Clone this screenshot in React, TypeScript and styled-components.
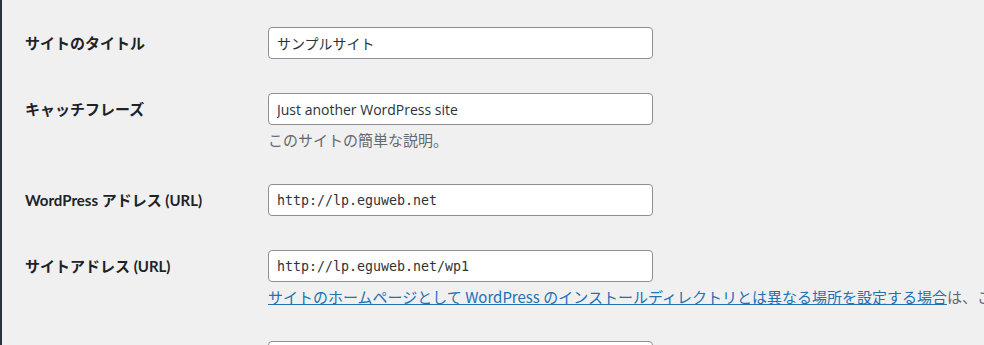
import React from "react";
import styled, { createGlobalStyle } from "styled-components";

const GlobalStyle = createGlobalStyle`
  html, body {
    margin: 0;
    padding: 0;
    background: #f0f0f1;
    overflow: hidden;
  }
  body {
    font-family: "Noto Sans CJK JP", "Open Sans", sans-serif;
    color: #1d2327;
  }
`;

const fields = [
  { id: "blogname", label: "サイトのタイトル", value: "サンプルサイト", mono: false },
  {
    id: "blogdescription",
    label: "キャッチフレーズ",
    value: "Just another WordPress site",
    mono: false,
    desc: "このサイトの簡単な説明。",
  },
  { id: "siteurl", label: "WordPress アドレス (URL)", value: "http://lp.eguweb.net", mono: true },
  {
    id: "home",
    label: "サイトアドレス (URL)",
    value: "http://lp.eguweb.net/wp1",
    mono: true,
    link: "サイトのホームページとして WordPress のインストールディレクトリとは異なる場所を設定する場合",
    linkRest: "は、ここにアドレスを入力してください。",
  },
  { id: "new_admin_email", label: "管理者メールアドレス", value: "info@eguweb.net", mono: false },
];

const App = () => {
  return (
    <>
      <GlobalStyle />
      <Page>
        <MenuEdge />
        <Main>
          <Form>
            {fields.map((f) => (
              <Row key={f.id}>
                <Label htmlFor={f.id}>{f.label}</Label>
                <Cell>
                  <Input id={f.id} defaultValue={f.value} $mono={f.mono} />
                  {f.desc && <Description>{f.desc}</Description>}
                  {f.link && (
                    <Description>
                      <Link href="#">{f.link}</Link>
                      {f.linkRest}
                    </Description>
                  )}
                </Cell>
              </Row>
            ))}
          </Form>
        </Main>
      </Page>
    </>
  );
};

export default App;

const Page = styled.div`
  display: flex;
  width: 100%;
  height: 345px;
  overflow: hidden;
`;

const MenuEdge = styled.div`
  width: 2px;
  flex-shrink: 0;
  background: #2c3338;
`;

const Main = styled.div`
  flex: 1;
  padding: 10px 0 0 23px;
  min-width: 0;
`;

const Form = styled.div`
  display: flex;
  flex-direction: column;
`;

const Row = styled.div`
  display: grid;
  grid-template-columns: 243px 1fr;
  padding: 17px 0;
`;

const Label = styled.label`
  font-family: Lato, "Noto Sans CJK JP", sans-serif;
  font-size: 15px;
  font-weight: 700;
  line-height: 32px;
  height: 32px;
  color: #1d2327;
  white-space: nowrap;
`;

const Cell = styled.div`
  display: flex;
  flex-direction: column;
  min-width: 0;
`;

const Input = styled.input<{ $mono: boolean }>`
  box-sizing: border-box;
  width: 385px;
  height: 32px;
  padding: 0 8px;
  border: 1px solid #8c8f94;
  border-radius: 4px;
  background: #fff;
  color: #2c3338;
  font-size: ${(p) => (p.$mono ? "13.3px" : "14px")};
  font-family: ${(p) =>
    p.$mono
      ? '"DejaVu Sans Mono", "Liberation Mono", monospace'
      : '"Open Sans", "Noto Sans CJK JP", sans-serif'};
  outline: none;
`;

const Description = styled.p`
  margin: 4px 0 0;
  font-size: 15px;
  line-height: 21px;
  color: #646970;
  white-space: nowrap;
`;

const Link = styled.a`
  color: #2271b1;
  text-decoration: underline;
`;
